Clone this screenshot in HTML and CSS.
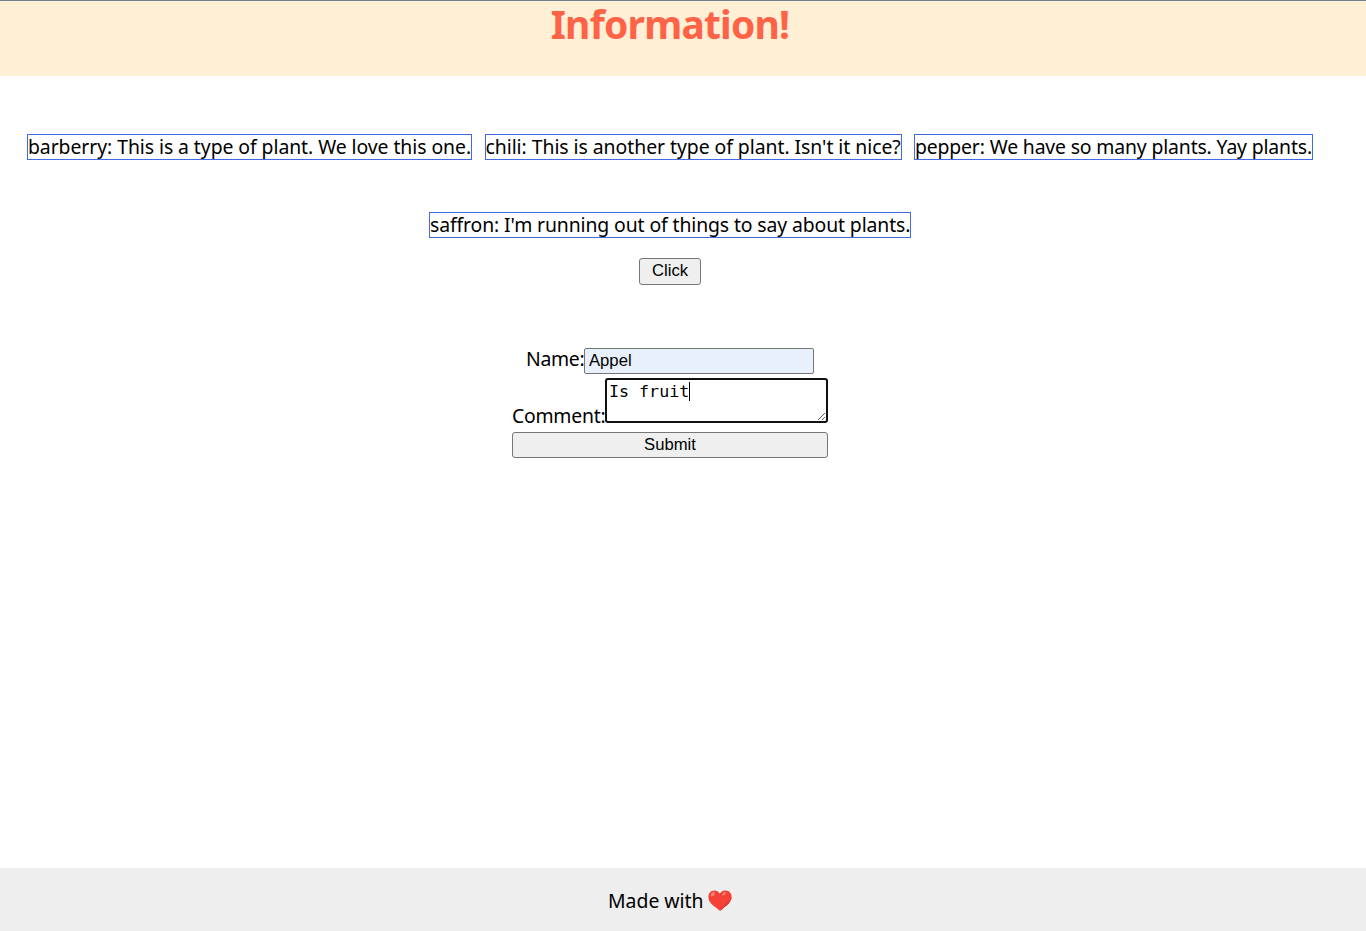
FILE: index.html
```html
<!DOCTYPE html>
<html lang="en">
<head>
<meta charset="utf-8">
<title>Information!</title>
<link rel="stylesheet" href="styles.css">
</head>
<body>
<header class="header"><h1 class="title">Information!</h1></header>
<main class="main">
  <ul class="plants">
    <li class="plant barberry">barberry: This is a type of plant. We love this one.</li>
    <li class="plant chili">chili: This is another type of plant. Isn't it nice?</li>
    <li class="plant pepper">pepper: We have so many plants. Yay plants.</li>
    <li class="plant saffron">saffron: I'm running out of things to say about plants.</li>
  </ul>
  <button class="button click" type="button">Click</button>
  <form class="form">
    <div class="field"><label class="name-label" for="name">Name:</label><input class="name" id="name" value="Appel"></div>
    <div class="field comment-field"><label class="comment-label" for="comment">Comment:</label><div class="comment-wrap"><textarea class="comment" id="comment">Is fruit</textarea><span class="caret"></span></div></div>
    <button class="button submit" type="button">Submit</button>
  </form>
</main>
<footer class="footer">
  <span class="made">Made with</span>
  <svg class="heart" viewBox="0 0 24 21" width="24" height="21" aria-hidden="true">
    <path fill="#f44336" d="M12 3.7C10.4 1.1 8.4.4 6.4.4 2.700.4.400 3.300.400 6.900c0 5.300 4.400 8.200 8.200 11.200 1.200 1 2.200 2.500 3.400 2.500s2.200-1.500 3.400-2.500c3.800-3 8.200-5.900 8.200-11.200 0-3.600-2.300-6.500-6-6.500-2 0-4 .7-5.600 3.300z"/>
    <path fill="#c33" d="M12 3.700c1-2 3-3.300 5.200-3.200-2 .5-3.600 1.700-4.400 3.500-.3.700-.8.500-.8-.3zM23.500 5c.5 6.500-4.500 9.700-8.300 12.900-1.200 1.100-2 2.700-3.200 2.700 1-1.100 1.700-2.400 3.200-3.800C18.500 13.700 23.500 11.200 23.500 5z"/>
    <ellipse cx="4.800" cy="4.300" rx="2.600" ry="1.500" fill="#ff847a" transform="rotate(-45 4.800 4.300)"/>
    <ellipse cx="16" cy="3.800" rx="2.200" ry="1.200" fill="#ff847a" transform="rotate(-35 16 3.800)"/>
  </svg>
</footer>
</body>
</html>
```
FILE: styles.css
```css
* { box-sizing: border-box; }
body {
  margin: 0;
  height: 931px;
  display: flex;
  flex-direction: column;
  overflow: hidden;
  background: #fff;
  color: #000;
  font: 19.4px/24px "Noto Sans", sans-serif;
}
.header {
  height: 76px;
  padding-right: 26px;
  border-top: 1px solid #708090;
  background: #ffefd5;
  text-align: center;
}
.title {
  margin: 0;
  color: #ff6347;
  font-size: 39px;
  line-height: 46px;
  letter-spacing: -0.8px;
  white-space: nowrap;
}
.main {
  flex: 1;
  display: flex;
  flex-direction: column;
  align-items: center;
  padding: 58px 26px 0 0;
}
.plants {
  margin: 0;
  padding: 0;
  width: 1340px;
  display: flex;
  flex-wrap: wrap;
  justify-content: center;
  gap: 52px 12.5px;
  list-style: none;
}
.plant {
  height: 26px;
  border: 1px solid #4169e1;
  white-space: nowrap;
}
.barberry { width: 445px; letter-spacing: -0.065px; }
.chili { width: 417px; letter-spacing: -0.045px; }
.pepper { width: 399px; letter-spacing: -0.155px; }
.saffron { width: 482px; letter-spacing: -0.115px; }
.button {
  padding: 0;
  border: 1px solid #767676;
  border-radius: 3px;
  background: #efefef;
  color: #000;
  font: 16.67px/22px "Liberation Sans", sans-serif;
}
.click { width: 62px; height: 27px; margin-top: 20px; padding-bottom: 2px; }
.form {
  width: 316px;
  margin-top: 63px;
  display: flex;
  flex-direction: column;
}
.field { display: flex; justify-content: center; white-space: nowrap; }
.name-label { width: 58px; margin-top: -1px; letter-spacing: -0.3px; }
.name {
  width: 230px;
  height: 26px;
  padding: 0 4px;
  border: 1px solid #767676;
  border-radius: 2px;
  background: #e8f0fe;
  font: 16.67px "Liberation Sans", sans-serif;
}
.comment-field { margin-top: 4px; align-items: flex-end; }
.comment-label { width: 93px; margin-bottom: -5px; letter-spacing: -0.25px; }
.comment-wrap { position: relative; width: 223px; height: 45px; }
.comment {
  display: block;
  width: 223px;
  height: 45px;
  margin: 0;
  padding: 2px;
  border: 2px solid #101010;
  border-radius: 3px;
  outline: 0;
  overflow: hidden;
  background: #fff;
  font: 16.67px/19px "DejaVu Sans Mono", monospace;
}
.caret { position: absolute; left: 84px; top: 4px; width: 1px; height: 19px; background: #000; }
.submit { width: 316px; height: 26px; margin-top: 9px; }
.footer {
  height: 63px;
  padding: 2px 26px 0 0;
  display: flex;
  justify-content: center;
  align-items: center;
  background: #eee;
}
.made { width: 100px; white-space: nowrap; }
```
